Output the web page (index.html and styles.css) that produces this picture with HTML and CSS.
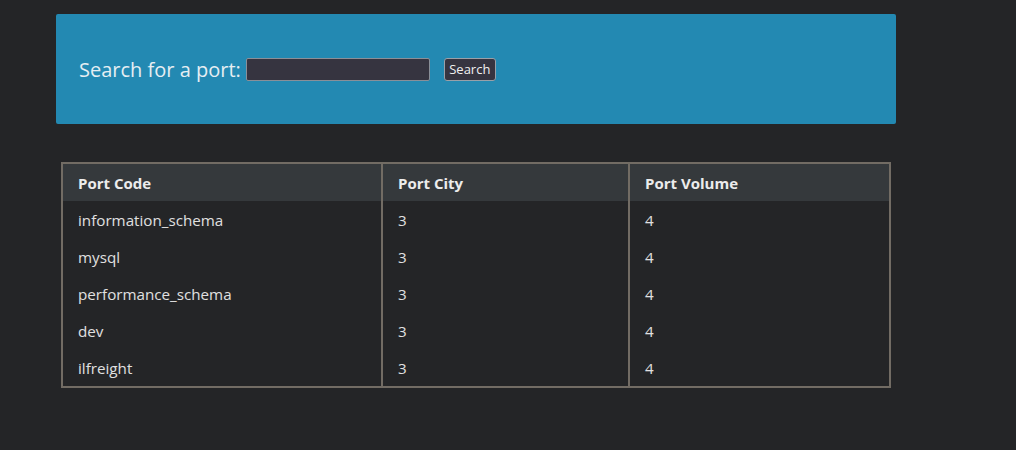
FILE: index.html
```html
<!DOCTYPE html>
<html>
<head>
<meta charset="utf-8">
<link rel="stylesheet" href="styles.css">
</head>
<body>
<div class="page">
  <div class="search-panel">
    <form class="search-form">
      <label class="search-label" for="port">Search for a port:</label>
      <input class="search-input" id="port" type="text">
      <button class="search-btn" type="button">Search</button>
    </form>
  </div>
  <table class="ports">
    <colgroup>
      <col class="c1"><col class="c2"><col class="c3">
    </colgroup>
    <thead>
      <tr><th>Port Code</th><th>Port City</th><th>Port Volume</th></tr>
    </thead>
    <tbody>
      <tr><td>information_schema</td><td>3</td><td>4</td></tr>
      <tr><td>mysql</td><td>3</td><td>4</td></tr>
      <tr><td>performance_schema</td><td>3</td><td>4</td></tr>
      <tr><td>dev</td><td>3</td><td>4</td></tr>
      <tr><td>ilfreight</td><td>3</td><td>4</td></tr>
    </tbody>
  </table>
</div>
</body>
</html>
```

FILE: styles.css
```css
html, body {
  margin: 0;
  padding: 0;
  background: #242527;
  font-family: "Open Sans", "DejaVu Sans", sans-serif;
  color: #e3e3e3;
}
.page {
  padding: 14px 0 0 56px;
}
.search-panel {
  width: 840px;
  height: 110px;
  background: #2389b2;
  border-radius: 2px;
  display: flex;
  align-items: center;
  box-sizing: border-box;
  padding-left: 23px;
}
.search-form {
  display: flex;
  align-items: center;
  margin: 0;
}
.search-label {
  font-size: 20px;
  color: #e6eef3;
  margin-right: 5px;
}
.search-input {
  width: 184px;
  height: 23px;
  box-sizing: border-box;
  background: #363440;
  border: 1px solid #8a8f98;
  border-radius: 2px;
  margin: 0;
  padding: 0 4px;
  color: #eee;
}
.search-btn {
  margin-left: 14px;
  height: 23px;
  width: 52px;
  box-sizing: border-box;
  padding: 0;
  background: #363440;
  border: 1px solid #9aa0a8;
  border-radius: 3px;
  color: #f0f0f0;
  font-family: "Open Sans", "DejaVu Sans", sans-serif;
  font-size: 13px;
  line-height: 21px;
}
.ports {
  margin: 38px 0 0 5px;
  border-collapse: collapse;
  border: 2px solid #726c64;
  table-layout: fixed;
  width: 828px;
  font-size: 15.2px;
}
.ports .c1 { width: 320px; }
.ports .c2 { width: 247px; }
.ports .c3 { width: 261px; }
.ports th, .ports td {
  border-left: 2px solid #726c64;
  border-right: 2px solid #726c64;
  padding: 9px 15px 7px;
  line-height: 21px;
  text-align: left;
  vertical-align: middle;
}
.ports th {
  background: #35393c;
  font-weight: 700;
  font-size: 15px;
  color: #ececec;
}
.ports td {
  color: #e0e0e0;
}
```
